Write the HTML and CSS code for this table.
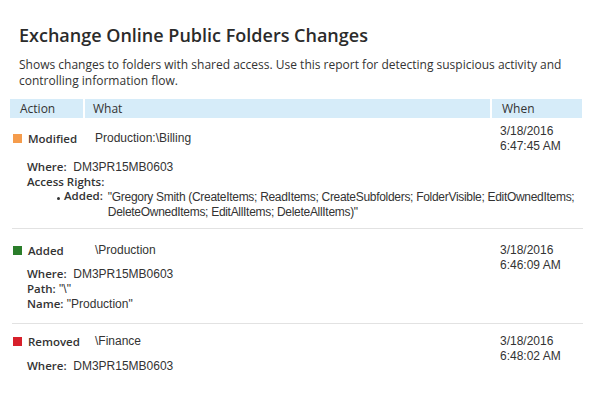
FILE: index.html
```html
<!DOCTYPE html>
<html>
<head>
<meta charset="utf-8">
<link rel="stylesheet" href="styles.css">
</head>
<body>
<div class="report">
  <h1 class="title">Exchange Online Public Folders Changes</h1>
  <p class="desc">Shows changes to folders with shared access. Use this report for detecting suspicious activity and controlling information flow.</p>
  <div class="head">
    <div class="hcell">Action</div>
    <div class="hcell hwhat">What</div>
    <div class="hcell hwhen">When</div>
  </div>

  <div class="row row1">
    <div class="act"><span class="sq sq-mod"></span><span class="lbl">Modified</span></div>
    <div class="what">Production:\Billing</div>
    <div class="when">3/18/2016<br>6:47:45 AM</div>
    <div class="details">
      <div class="line"><span class="lbl">Where:</span>&nbsp; <span class="val">DM3PR15MB0603</span></div>
      <div class="line"><span class="lbl">Access Rights:</span></div>
      <ul class="list">
        <li class="item"><span class="lbl">Added:</span><span class="val wrapval">"Gregory Smith (CreateItems; ReadItems; CreateSubfolders; FolderVisible; EditOwnedItems; DeleteOwnedItems; EditAllItems; DeleteAllItems)"</span></li>
      </ul>
    </div>
  </div>

  <div class="row row2">
    <div class="act"><span class="sq sq-add"></span><span class="lbl">Added</span></div>
    <div class="what">\Production</div>
    <div class="when">3/18/2016<br>6:46:09 AM</div>
    <div class="details">
      <div class="line"><span class="lbl">Where:</span>&nbsp; <span class="val">DM3PR15MB0603</span></div>
      <div class="line"><span class="lbl">Path:</span> <span class="val">"\"</span></div>
      <div class="line"><span class="lbl">Name:</span> <span class="val">"Production"</span></div>
    </div>
  </div>

  <div class="row row3">
    <div class="act"><span class="sq sq-rem"></span><span class="lbl">Removed</span></div>
    <div class="what">\Finance</div>
    <div class="when">3/18/2016<br>6:48:02 AM</div>
    <div class="details">
      <div class="line"><span class="lbl">Where:</span>&nbsp; <span class="val">DM3PR15MB0603</span></div>
    </div>
  </div>
</div>
</body>
</html>
```
FILE: styles.css
```css
html, body {
  margin: 0;
  padding: 0;
  background: #fff;
}
body {
  font-family: "Open Sans", "Noto Sans", sans-serif;
  color: #333;
}
.report {
  padding: 22px 8px 0 10px;
  width: 572px;
}
.title {
  margin: 0 0 0 9px;
  font-size: 18px;
  font-weight: 600;
  line-height: 26px;
  color: #2b2b2b;
}
.desc {
  margin: 9px 0 10px 9px;
  font-size: 12px;
  line-height: 16px;
  color: #333;
}
.head {
  display: grid;
  grid-template-columns: 73px 405px 90px;
  column-gap: 2px;
}
.hcell {
  background: #d6ecf9;
  height: 19px;
  line-height: 19px;
  font-size: 12px;
  padding-left: 10px;
  color: #333;
}
.hwhat { padding-left: 8px; }
.hwhen { padding-left: 10px; }

.row {
  display: grid;
  grid-template-columns: 73px 405px 90px;
  column-gap: 2px;
  font-family: "Liberation Sans", Arial, sans-serif;
  font-size: 12px;
  line-height: 15px;
  color: #333;
  border-bottom: 1px solid #e2e2e2;
  margin-left: 2px;
  width: 571px;
}
.row3 { border-bottom: none; }
.act {
  grid-column: 1;
  grid-row: 1;
  display: flex;
  align-items: center;
  padding-left: 1px;
  height: 15px;
}
.sq {
  width: 9px;
  height: 9px;
  margin-right: 6px;
  flex: none;
}
.sq-mod { background: #f59c4c; }
.sq-add { background: #2a7d2a; }
.sq-rem { background: #d7202b; }
.lbl {
  font-family: "Open Sans", "Noto Sans", sans-serif;
  font-weight: 600;
  font-size: 11.5px;
  line-height: 12px;
  color: #333;
}
.what {
  grid-column: 2;
  grid-row: 1;
  padding-left: 8px;
}
.when {
  grid-column: 3;
  grid-row: 1 / span 2;
  padding-left: 6px;
}
.details {
  grid-column: 1 / -1;
  grid-row: 2;
  padding-left: 15px;
}
.line {
  height: 15px;
}
.list {
  margin: 0;
  padding: 0 0 0 37px;
  list-style: none;
}
.item {
  display: flex;
  position: relative;
}
.item::before {
  content: "";
  position: absolute;
  left: -7px;
  top: 7px;
  width: 3px;
  height: 3px;
  border-radius: 50%;
  background: #333;
}
.wrapval {
  margin-left: 5px;
  flex: 1;
  letter-spacing: -0.3px;
}

.row1 .act, .row1 .what { margin-top: 13px; }
.row1 .when { margin-top: 6px; }
.row1 .details { margin-top: 14px; padding-bottom: 8px; }

.row2 .act, .row2 .what, .row2 .when { margin-top: 14px; }
.row2 .details { margin-top: 9px; padding-bottom: 11px; }

.row3 .act, .row3 .what, .row3 .when { margin-top: 10px; }
.row3 .details { margin-top: 10px; }
```
